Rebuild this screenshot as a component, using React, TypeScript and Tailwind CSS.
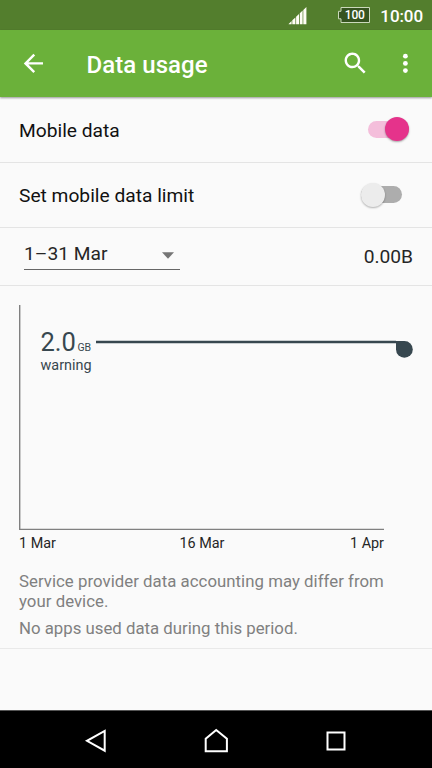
import React from "react";

function StatusBar() {
  return (
    <div className="flex h-[30px] shrink-0 items-center justify-end bg-[#537e2d] pr-[9px] text-white">
      <svg className="mt-[1px] mr-[30px] h-[18px] w-[19px]" viewBox="0 0 19 18" fill="#fffdf5">
        <path d="M0.6 17.3V16.9L3.6 14.1V17.3ZM4.3 17.3V13.3L7.4 10.4V17.3ZM8.1 17.3V9.7L11 7V17.3ZM11.8 17.3V6.2L14.6 3.6V17.3ZM15.3 17.3V2.9L18.4 0V17.3Z" />
      </svg>
      <div className="relative mr-[9px] h-[18px] w-[34px]">
        <svg className="absolute inset-0 h-[18px] w-[34px]" viewBox="0 0 34 18">
          <path d="M4 1.5H32.5V16.5H4V12.8H1.5V5.3H4Z" fill="#365420" stroke="#cbd9bc" strokeWidth="1" />
        </svg>
        <span className="absolute top-0 left-[7.5px] text-[12px] leading-[18px] tracking-[-0.2px] font-medium">100</span>
      </div>
      <span className="pt-[1px] text-[17px] leading-[30px] font-medium tracking-[-0.1px]">10:00</span>
    </div>
  );
}

function AppBar() {
  return (
    <header className="relative z-10 flex h-[67px] shrink-0 items-center bg-[#6bb13a] text-white shadow-[0_1px_2px_rgba(0,0,0,0.4)]">
      <svg className="ml-[19px] h-[28.8px] w-[28.8px] shrink-0" viewBox="0 0 24 24" fill="currentColor">
        <path d="M20 11H7.83l5.59-5.59L12 4l-8 8 8 8 1.41-1.41L7.83 13H20v-2z" />
      </svg>
      <h1 className="mt-[3px] ml-[38.6px] text-[24px] leading-[30px] font-medium whitespace-nowrap tracking-[0.07px]">Data usage</h1>
      <svg className="mr-[21px] ml-auto h-[28.8px] w-[28.8px] shrink-0" viewBox="0 0 24 24" fill="currentColor">
        <path d="M15.5 14h-.79l-.28-.27C15.41 12.59 16 11.11 16 9.5 16 5.91 13.09 3 9.5 3S3 5.91 3 9.5 5.91 16 9.5 16c1.61 0 3.09-.59 4.23-1.57l.27.28v.79l5 4.99L20.49 19l-4.99-5zm-6 0C7.01 14 5 11.99 5 9.5S7.01 5 9.5 5 14 7.01 14 9.5 11.99 14 9.5 14z" />
      </svg>
      <svg className="mr-[12px] h-[28.8px] w-[28.8px] shrink-0" viewBox="0 0 24 24" fill="currentColor">
        <circle cx="12" cy="6" r="2" />
        <circle cx="12" cy="12" r="2" />
        <circle cx="12" cy="18" r="2" />
      </svg>
    </header>
  );
}

function Toggle({ on }: { on: boolean }) {
  return (
    <button
      role="switch"
      aria-checked={on}
      className={
        on
          ? "mr-[23.5px] mb-[1px] flex h-[17px] w-[41px] items-center justify-end rounded-full bg-[#f4bedb]"
          : "mr-[30px] mb-[1px] flex h-[17px] w-[41.5px] items-center rounded-full bg-[#adadad]"
      }
    >
      <span
        className={
          on
            ? "h-[24px] w-[24px] shrink-0 rounded-full bg-[#e5338b] shadow-[0_1px_2px_rgba(0,0,0,0.35)]"
            : "h-[24px] w-[24px] shrink-0 rounded-full bg-[#ececec] shadow-[0_1px_2px_rgba(0,0,0,0.3)]"
        }
      />
    </button>
  );
}

function SettingRow({ label, on }: { label: string; on: boolean }) {
  return (
    <div className="flex shrink-0 items-center justify-between border-b border-[#e4e4e4] pl-[19px]">
      <span className="pt-[2px] text-[19.2px] leading-[24px] text-[#111]">{label}</span>
      <Toggle on={on} />
    </div>
  );
}

function UsageChart() {
  return (
    <div className="relative h-[225px] w-[413px]">
      <svg className="absolute inset-0 h-[225px] w-[413px]" viewBox="0 0 413 225">
        <path d="M19.7 0V224.5H384" fill="none" stroke="#808080" strokeWidth="1.4" />
        <path d="M96 37H396" stroke="#37474f" strokeWidth="2.4" />
        <path d="M396 36H404.4A8.4 8.4 0 1 1 396 44.4Z" fill="#37474f" />
      </svg>
      <div className="absolute top-[22px] left-[40.5px] text-[#37474f]">
        <div className="flex items-baseline">
          <span className="text-[25.5px] leading-[30px]">2.0</span>
          <span className="ml-[1.5px] text-[10.5px]">GB</span>
        </div>
        <div className="text-[14.4px] leading-[17px]">warning</div>
      </div>
    </div>
  );
}

function NavBar() {
  return (
    <nav className="flex h-[58px] shrink-0 items-center justify-center border-t border-[#555] bg-black">
      <svg className="h-[28px] w-[264px]" viewBox="0 0 264 28" fill="none" stroke="white" strokeWidth="2">
        <path d="M20.7 5V24.7L3 14.8Z" />
        <path d="M121.7 25.2V12.7L132.2 4L142.9 12.7V25.2Z" />
        <path d="M243.5 6.5H260.5V23.5H243.5Z" />
      </svg>
    </nav>
  );
}

export default function App() {
  return (
    <div className="flex h-[768px] w-[432px] flex-col overflow-hidden bg-[#fafafa] font-['Roboto',sans-serif]">
      <StatusBar />
      <AppBar />
      <main className="flex grow flex-col">
        <div className="grid h-[131px] shrink-0 grid-rows-[66px_65px]">
          <SettingRow label="Mobile data" on={true} />
          <SettingRow label="Set mobile data limit" on={false} />
        </div>
        <div className="flex h-[58px] shrink-0 items-start justify-between border-b border-[#e4e4e4] pr-[19px] pl-[24px] text-[19.2px] leading-[24px] text-[#262626]">
          <div className="mt-[14px] flex h-[28px] w-[156px] items-start justify-between border-b border-[#666]">
            <span>1–31 Mar</span>
            <svg className="mt-[10px] mr-[6px] h-[7px] w-[12px]" viewBox="0 0 12 7" fill="#757575">
              <path d="M0 0.3H12L6 6.7Z" />
            </svg>
          </div>
          <span className="mt-[17px]">0.00B</span>
        </div>
        <section className="pt-[19px]">
          <UsageChart />
          <div className="flex w-[384px] justify-between pt-[5px] pl-[19px] text-[14.4px] leading-[17px] text-[#262626]">
            <span>1 Mar</span>
            <span className="-ml-[2px]">16 Mar</span>
            <span>1 Apr</span>
          </div>
        </section>
        <div className="border-b border-[#e9e9e9] pt-[19px] pb-[10px] pl-[19px] text-[16.8px] leading-[20px] text-[#808080]">
          <p className="w-[380px] tracking-[0.03px]">
            Service provider data accounting may differ from
            <br />
            your device.
          </p>
          <p className="mt-[7px]">No apps used data during this period.</p>
        </div>
      </main>
      <NavBar />
    </div>
  );
}
